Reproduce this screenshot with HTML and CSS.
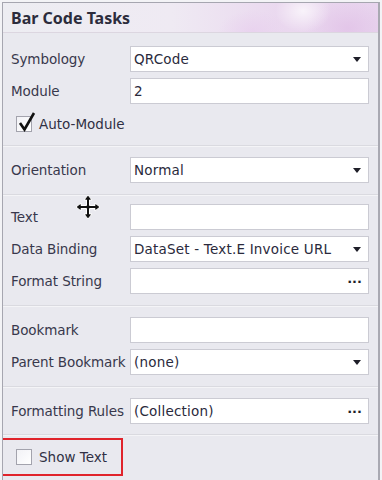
FILE: index.html
```html
<!DOCTYPE html>
<html>
<head>
    <meta charset="UTF-8">
    <title>Bar Code Tasks</title>
    <link rel="stylesheet" href="styles.css">
</head>
<body>
    <div class="panel">
        <div class="header">Bar Code Tasks</div>

        <div class="section first">
            <div class="grid">
                <label>Symbology</label>
                <div class="box combo"><span>QRCode</span><i class="arrow"></i></div>
                <label>Module</label>
                <div class="box"><span>2</span></div>
            </div>
            <div class="check-row">
                <span class="check checked">
                    <svg width="20" height="22" viewBox="0 0 20 22">
                        <path d="M3 12 L7.5 18.5 L17 2" fill="none" stroke="#111" stroke-width="2.6"/>
                    </svg>
                </span>
                <span class="check-label">Auto-Module</span>
            </div>
        </div>

        <div class="section">
            <div class="grid">
                <label>Orientation</label>
                <div class="box combo"><span>Normal</span><i class="arrow"></i></div>
            </div>
        </div>

        <div class="section third">
            <div class="grid">
                <label>Text</label>
                <div class="box"></div>
                <label>Data Binding</label>
                <div class="box combo"><span>DataSet - Text.E Invoice URL</span><i class="arrow"></i></div>
                <label>Format String</label>
                <div class="box combo"><span></span><b class="dots">&middot;&middot;&middot;</b></div>
            </div>
            <!-- move cursor sitting over the panel -->
            <svg class="cursor" width="28" height="26" viewBox="0 0 28 26">
                <path d="M14 1 L18 6 L15.5 6 L15.5 11.5 L21 11.5 L21 9 L26 13 L21 17 L21 14.5 L15.5 14.5 L15.5 20 L18 20 L14 25 L10 20 L12.5 20 L12.5 14.5 L7 14.5 L7 17 L2 13 L7 9 L7 11.5 L12.5 11.5 L12.5 6 L10 6 Z" fill="#111" stroke="#fff" stroke-width="1"/>
            </svg>
        </div>

        <div class="section">
            <div class="grid">
                <label>Bookmark</label>
                <div class="box"></div>
                <label>Parent Bookmark</label>
                <div class="box combo"><span>(none)</span><i class="arrow"></i></div>
            </div>
        </div>

        <div class="section last">
            <div class="grid">
                <label>Formatting Rules</label>
                <div class="box combo"><span>(Collection)</span><b class="dots">&middot;&middot;&middot;</b></div>
            </div>
        </div>

        <div class="show-text">
            <span class="check"></span>
            <span class="check-label">Show Text</span>
        </div>
    </div>
</body>
</html>
```

FILE: styles.css
```css
body {
    margin: 0;
    background-color: #f3f3f6;
    font-family: "DejaVu Sans", "Noto Sans", sans-serif;
    font-size: 13.5px;
    color: #36364a;
}
.panel {
    margin: 2px 2px 0 2px;
    height: 478px;
    box-sizing: border-box;
    border: 1px solid #a6a6b0;
    border-bottom: none;
    border-right: 2px solid #a9a9b2;
    background-color: #e9e9ef;
    overflow: hidden;
}
.header {
    height: 30px;
    box-sizing: border-box;
    padding-left: 8px;
    display: flex;
    align-items: center;
    font-family: "Noto Sans", sans-serif;
    font-size: 16px;
    font-weight: bold;
    color: #2c2c3c;
    border-bottom: 1px solid #dcd6e0;
    background:
        radial-gradient(ellipse 40px 30px at 300px 8px, rgba(255,255,255,0.7), rgba(255,255,255,0) 70%),
        radial-gradient(ellipse 60px 40px at 345px 25px, rgba(226,196,232,0.9), rgba(226,196,232,0) 70%),
        radial-gradient(ellipse 50px 30px at 250px 28px, rgba(232,208,238,0.8), rgba(232,208,238,0) 70%),
        linear-gradient(to right, #ededf2 0%, #efeaf3 45%, #ead8ef 75%, #e8d4ee 100%);
}
/* Sections separated by thin lines */
.section {
    padding: 11px 0 11px 0;
    border-bottom: 1px solid #dadae0;
    box-shadow: 0 1px 0 #f4f4f7;
    position: relative;
}
.section.first {
    padding-top: 13px;
}
.section.third {
    padding-top: 9px;
}
.section.last {
    padding-bottom: 10px;
}
.grid {
    display: grid;
    grid-template-columns: 119px 239px;
    grid-auto-rows: 26px;
    row-gap: 6px;
    padding-left: 8px;
}
label {
    display: flex;
    align-items: center;
    white-space: nowrap;
    color: #38384c;
    letter-spacing: -0.1px;
}
.box {
    background-color: #ffffff;
    border: 1px solid #cbcbd3;
    display: flex;
    align-items: center;
    padding: 0 6px 0 3px;
    color: #2a2a3c;
    letter-spacing: 0.2px;
}
.box span {
    flex: 1;
    white-space: nowrap;
}
.arrow {
    width: 0;
    height: 0;
    border-left: 4px solid transparent;
    border-right: 4px solid transparent;
    border-top: 5px solid #1e1e28;
    margin-right: 1px;
}
.dots {
    font-weight: bold;
    font-size: 13px;
    letter-spacing: 0;
    color: #1e1e28;
}
.check-row {
    display: flex;
    align-items: center;
    height: 20px;
    margin-top: 10px;
    padding-left: 13px;
}
.check {
    width: 16px;
    height: 16px;
    box-sizing: border-box;
    border: 1px solid #a3a3ad;
    background: linear-gradient(135deg, #f2f2f6, #ffffff);
    position: relative;
    flex: none;
}
.check svg {
    position: absolute;
    left: 0;
    top: -6px;
}
.check-label {
    margin-left: 7px;
    color: #303044;
}
.cursor {
    position: absolute;
    left: 71px;
    top: -1px;
}
.show-text {
    margin: 3px 0 0 -2px;
    width: 122px;
    height: 38px;
    box-sizing: border-box;
    border: 2px solid #e0232b;
    display: flex;
    align-items: center;
    padding-left: 13px;
}
```
